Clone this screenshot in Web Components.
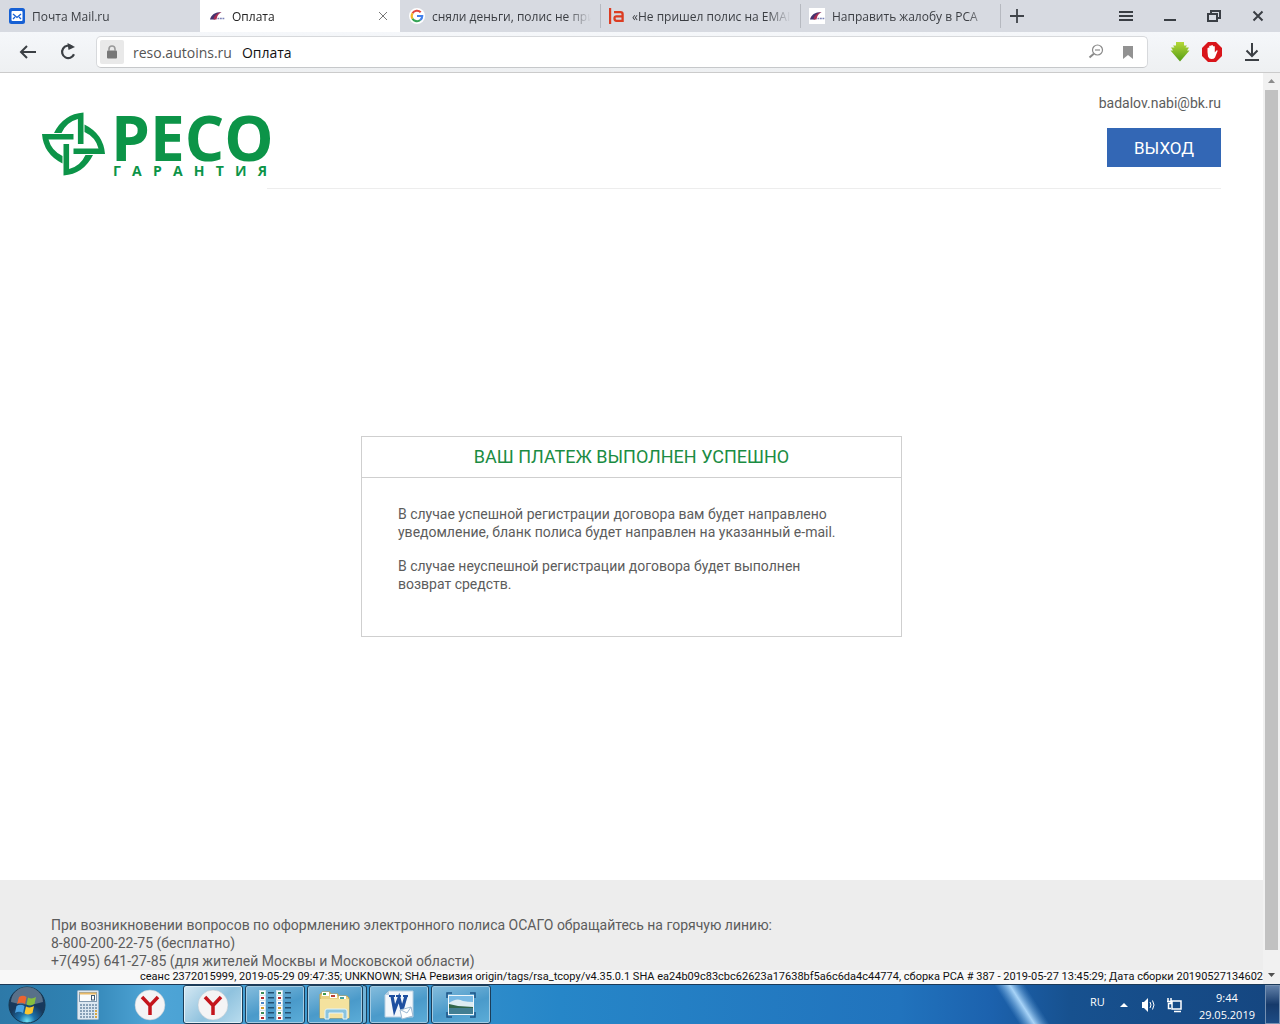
<!DOCTYPE html>
<html lang="ru">
<head>
<meta charset="utf-8">
<title>Оплата</title>
<style>
  html, body { height: 100%; margin: 0; }
  body { font-family: Roboto, "Liberation Sans", sans-serif; overflow: hidden; background: #fff; }
</style>
</head>
<body>
<desktop-shell>
  <tab-strip slot="tabs">
    <browser-tab><mail-icon slot="icon"></mail-icon>Почта Mail.ru</browser-tab>
    <browser-tab active><rsa-icon slot="icon"></rsa-icon>Оплата</browser-tab>
    <browser-tab><google-icon slot="icon"></google-icon>сняли деньги, полис не пришел</browser-tab>
    <browser-tab divided><la-icon slot="icon"></la-icon>«Не пришел полис на EMAIL</browser-tab>
    <browser-tab divided><rsa-icon slot="icon"></rsa-icon>Направить жалобу в РСА</browser-tab>
  </tab-strip>
  <address-row slot="toolbar"></address-row>
  <site-page slot="page">
    <site-header>badalov.nabi@bk.ru</site-header>
    <message-card>
      <span slot="title">ВАШ ПЛАТЕЖ ВЫПОЛНЕН УСПЕШНО</span>
      <p>В случае успешной регистрации договора вам будет направлено уведомление, бланк полиса будет направлен на указанный e-mail.</p>
      <p>В случае неуспешной регистрации договора будет выполнен возврат средств.</p>
    </message-card>
    <site-footer slot="footer">
      <div>При возникновении вопросов по оформлению электронного полиса ОСАГО обращайтесь на горячую линию:</div>
      <div>8-800-200-22-75 (бесплатно)</div>
      <div>+7(495) 641-27-85 (для жителей Москвы и Московской области)</div>
    </site-footer>
    <build-line slot="footer">сеанс 2372015999, 2019-05-29 09:47:35; UNKNOWN; SHA Ревизия origin/tags/rsa_tcopy/v4.35.0.1 SHA ea24b09c83cbc62623a17638bf5a6c6da4c44774, сборка РСА # 387 - 2019-05-27 13:45:29; Дата сборки 20190527134602</build-line>
  </site-page>
  <task-bar slot="taskbar"></task-bar>
</desktop-shell>

<script>
const define = (name, html, setup) => customElements.define(name, class extends HTMLElement {
  constructor() {
    super();
    const root = this.attachShadow({ mode: 'open' });
    const t = document.createElement('template');
    t.innerHTML = html;
    root.append(t.content.cloneNode(true));
    if (setup) setup(this, root);
  }
});
const RESET = 'button{font:inherit;color:inherit;border:0;background:none;padding:0;margin:0;cursor:pointer}svg{display:block}';

define('desktop-shell', `<style>
  :host{display:flex;flex-direction:column;height:100vh}
  .page{flex:1;min-height:0;display:flex}
</style><slot name="tabs"></slot><slot name="toolbar"></slot><div class="page"><slot name="page"></slot></div><slot name="taskbar"></slot>`);

/* tab icons */
const icon = (name, size, body) => define(name, `<style>:host{display:block;flex:none;width:16px}svg{display:block}</style><svg width="16" height="16" viewBox="0 0 ${size} ${size}">${body}</svg>`);
icon('mail-icon', 16, '<rect width="16" height="16" rx="2.5" fill="#1660d4"/><rect x="2.5" y="3" width="11" height="10" rx="1" fill="#fff"/><path d="M4 6 8 9.500l4-3.500M4 11l2-2M12 11l-2-2" fill="none" stroke="#1660d4" stroke-width="1.300"/>');
icon('rsa-icon', 16, '<rect width="16" height="16" fill="#fff"/><path d="M1 11.500C2 7 6 4 12.500 4 8.500 5.500 6.500 8 6 11.500z" fill="#45336f"/><path d="M4.500 11.500C5 8 7.500 5.200 12.500 4c-3 1.800-4.500 4-5 7.500z" fill="#a92d51"/><path d="M8.500 10.500h1.800M11 10.500h1.800M13.500 10.500h1.800" stroke="#7c82b8" stroke-width="1.400"/>');
icon('google-icon', 16, '<circle cx="8" cy="8" r="8" fill="#fff"/><g fill="none" stroke-width="2.200"><path d="M3.500 5.300A5.200 5.200 0 0 1 11.700 4.300" stroke="#e2483b"/><path d="M3.500 5.300a5.200 5.200 0 0 0 0 5.400" stroke="#f2b725"/><path d="M3.500 10.700a5.200 5.200 0 0 0 7.800 1.300" stroke="#35a456"/><path d="M11.300 12c1.200-1 1.900-2.400 1.900-4H8" stroke="#4280ec"/></g>');
icon('la-icon', 16, '<path d="M1.100 0v16" stroke="#dc3c22" stroke-width="2.200"/><path d="M5 4.200h6.500Q13.600 4.200 13.600 6.300v6.500H7.500Q5.500 12.800 5.500 10.500T7.500 8.300h6" fill="none" stroke="#dc3c22" stroke-width="2.300"/>');

define('browser-tab', `<style>${RESET}
  :host{display:flex;align-items:center;flex:0 1 200px;min-width:0;box-sizing:border-box;height:32px;padding:0 9px;color:#3a3d42}
  :host([active]){background:#fff;color:#222}
  .sep{display:none;flex:none;width:1px;height:24px;margin-left:-9px;margin-right:8px;background:#b6b9c0}
  :host([divided]) .sep{display:block}
  .t{display:flex;align-items:center;gap:7px;flex:1;min-width:0;text-align:left}
  .l{overflow:hidden;white-space:nowrap;flex:1;-webkit-mask-image:linear-gradient(90deg,#000 calc(100% - 24px),transparent);mask-image:linear-gradient(90deg,#000 calc(100% - 24px),transparent)}
  .x{display:none;width:16px;height:16px}
  :host([active]) .x{display:block}
</style><span class="sep"></span><button class="t" role="tab"><slot name="icon"></slot><span class="l"><slot></slot></span></button><button class="x" aria-label="Закрыть вкладку"><svg width="16" height="16"><path d="M4 4l8 8M12 4l-8 8" stroke="#777" fill="none"/></svg></button>`);

define('tab-strip', `<style>${RESET}
  :host{display:flex;flex:none;align-items:center;height:32px;background:#d7dae1;font:12px "Open Sans","Noto Sans",sans-serif}
  .sep{width:1px;height:24px;background:#b6b9c0}
  .w{display:flex;margin-left:auto;padding-right:14px;gap:28px}
  .plus{margin-left:8px}
</style><slot></slot><span class="sep"></span><button class="plus" aria-label="Новая вкладка"><svg width="16" height="16"><path d="M8 1v14M1 8h14" stroke="#3f4349" stroke-width="1.800"/></svg></button>
<div class="w"><button aria-label="Меню"><svg width="16" height="16"><path d="M1 4h14M1 8h14M1 12h14" stroke="#3a3e44" stroke-width="2"/></svg></button>
<button aria-label="Свернуть"><svg width="16" height="16"><path d="M2 12h12" stroke="#3a3e44" stroke-width="2"/></svg></button>
<button aria-label="Окно"><svg width="16" height="16" fill="none" stroke="#3a3e44" stroke-width="2"><path d="M2 6h9v7H2zM5 6V3h9v7h-3"/></svg></button>
<button aria-label="Закрыть"><svg width="16" height="16"><path d="M3.500 3.500l9 9M12.500 3.500l-9 9" stroke="#3a3e44" stroke-width="2"/></svg></button></div>`);

define('address-row', `<style>${RESET}
  :host{display:flex;flex:none;align-items:center;box-sizing:border-box;height:41px;padding:0 20px 0 19px;background:linear-gradient(#f5f7fa,#eef0f2);border-bottom:1px solid #cbcbcb;font:14px "Open Sans","Noto Sans",sans-serif}
  .nav{display:flex;gap:22px;margin-right:19px}
  .box{display:flex;align-items:center;flex:1;min-width:0;box-sizing:border-box;height:32px;padding:0 11px 0 3px;background:#fff;border:1px solid #d7d9dc;border-bottom-color:#c6c8ca;border-radius:5px}
  .lock{display:flex;align-items:center;justify-content:center;width:24px;height:24px;background:#e9e9e9;border-radius:2px;margin-right:9px}
  label{color:#555;margin-right:10px}
  input{flex:1;min-width:0;font:inherit;color:#111;border:0;padding:0;background:none;outline:0}
  .in{display:flex;gap:16px}
  .ext{display:flex;align-items:center;gap:12px;margin-left:22px}
  .dl{margin-left:10px}
</style><div class="nav"><button aria-label="Назад"><svg width="18" height="20" fill="none" stroke="#3b3f44" stroke-width="2"><path d="M17 10H2M8 4l-6 6 6 6"/></svg></button>
<button aria-label="Обновить"><svg width="18" height="20"><path d="M13 4.900A6.200 6.200 0 1 0 15 12.300" fill="none" stroke="#3b3f44" stroke-width="2.200"/><path d="M8.500 1l7.500 4-6.500 3z" fill="#3b3f44"/></svg></button></div>
<div class="box"><span class="lock"><svg width="12" height="14"><rect x="1" y="5.500" width="10" height="8" rx="1" fill="#777"/><path d="M3 6V4a3 3 0 0 1 6 0v2" fill="none" stroke="#999" stroke-width="1.600"/></svg></span>
<label for="u">reso.autoins.ru</label><input id="u" value="Оплата">
<div class="in"><button aria-label="Масштаб"><svg width="16" height="16" fill="none" stroke="#8b8b8b"><circle cx="9.500" cy="6" r="5" stroke-width="1.200"/><path d="M7 6h5" stroke-width="1.200"/><path d="M5.800 9.700 1.500 13.500" stroke-width="2"/></svg></button>
<button aria-label="Закладка"><svg width="16" height="16"><path d="M3 2h10v13l-5-4-5 4z" fill="#929292"/></svg></button></div></div>
<div class="ext"><button aria-label="Загрузчик"><svg width="20" height="20"><defs><linearGradient id="g" x2="0" y2="1"><stop stop-color="#b5d839"/><stop offset="1" stop-color="#559d16"/></linearGradient></defs><path d="M6 0h8v3.500h3L15.500 5.500h3.500L17 8.500h2.500L10 19.500.5 8.500H3L1 5.500h3.500L3 3.500h3z" fill="url(#g)"/></svg></button>
<button aria-label="Блокировщик"><svg width="20" height="20"><path d="M6 0h8l6 6v8l-6 6H6l-6-6V6z" fill="#d9151b"/><path d="M5.500 10V6.200q1-1.200 1.700 0V4.200q1-1.200 1.900 0v-.7q1-1.200 1.900 0v1q1-1 1.800 0v6l1.600-2q1.200-.6 1.200.6L13 15.500q-1 1.500-3.500 1.500T6 14.500z" fill="#fff"/></svg></button>
<button class="dl" aria-label="Загрузки"><svg width="16" height="20" fill="none" stroke="#3b3f44" stroke-width="2"><path d="M8 1v13M2.500 8.500 8 14l5.500-5.500M1 18h14"/></svg></button></div>`);

define('scroll-track', `<style>
  :host{display:flex;flex-direction:column;align-items:center;flex:none;width:17px;background:#f1f1f1}
  svg{display:block;flex:none}.thumb{width:13px;flex:1;margin-bottom:17px;background:#c1c1c1}
</style><svg width="17" height="17"><path d="M5 10h7L8.500 6z" fill="#8b8b8b"/></svg><div class="thumb"></div><svg width="17" height="17"><path d="M5 6h7l-3.500 4z" fill="#505050"/></svg>`);

define('site-page', `<style>
  :host{display:flex;flex:1;min-width:0;background:#fff;color:#5c5c5c;font-size:14px;line-height:18px}
  .col{display:flex;flex-direction:column;flex:1;min-width:0}
</style><div class="col"><slot></slot><slot name="footer"></slot></div><scroll-track></scroll-track>`);

/* the mark is one blade turned four times about its centre */
const blade = a => `<path transform="rotate(${a})" d="M10-31.500V0H4.400V-25Q-7-22-12-11H-19.500Q-10-30 10-31.500z"/>`;
define('reso-logo', `<style>
  :host{display:flex;align-items:center;gap:6px;width:225px;color:#0c9448}
  svg{flex:none}
  .w{flex:1;min-width:0;font-family:"Open Sans","Noto Sans",sans-serif;font-weight:700}
  .big{font-size:62px;line-height:54px}
  .small{display:flex;justify-content:space-between;padding-left:2px;font-size:14px;line-height:14px}
</style><svg width="63" height="66" viewBox="-31.500 -33 63 66" fill="#0c9448">${[0, 90, 180, 270].map(blade).join('')}</svg>
<div class="w"><div class="big">РЕСО</div><div class="small"><span>Г</span><span>А</span><span>Р</span><span>А</span><span>Н</span><span>Т</span><span>И</span><span>Я</span></div></div>`);

define('site-header', `<style>${RESET}
  :host{display:flex;flex:none;height:116px;padding:0 42px}
  reso-logo{padding-top:26px}
  .r{flex:1;display:flex;flex-direction:column;align-items:flex-end;border-bottom:1px solid #ededed;box-sizing:border-box;padding-top:21px;gap:16px}
  .exit{width:114px;height:39px;background:#3367b5;color:#fff;font-size:17px}
</style><reso-logo></reso-logo><div class="r"><span><slot></slot></span><button class="exit">ВЫХОД</button></div>`);

define('message-card', `<style>
  :host{display:flex;flex:1;align-items:center;justify-content:center;padding-top:4px;box-sizing:border-box}
  .c{width:541px;box-sizing:border-box;border:1px solid #cfcfcf}
  h1{margin:0;font-size:18px;font-weight:400;line-height:40px;text-align:center;color:#1b8c43;border-bottom:1px solid #cfcfcf}
  .b{display:flex;flex-direction:column;gap:16px;padding:27px 52px 43px 36px}
  ::slotted(p){margin:0}
</style><section class="c"><h1><slot name="title"></slot></h1><div class="b"><slot></slot></div></section>`);

define('site-footer', `<style>
  :host{display:block;flex:none;background:#ededed;padding:36px 51px 0}
</style><slot></slot>`);
define('build-line', `<style>
  :host{display:block;flex:none;background:#f8f8f8;color:#111;font-size:11px;line-height:14px;text-align:right;white-space:nowrap}
</style><slot></slot>`);

define('task-button', `<style>${RESET}
  :host{display:flex;flex:none;width:60px;height:39px}
  button{display:flex;align-items:center;justify-content:center;flex:1;height:100%}
  .back{display:none;width:4px;box-sizing:border-box;border:1px solid #1b3d59;border-left:0;border-radius:0 3px 3px 0;background:#6fb2d8}
  :host([stack]) .back{display:block}
  :host([open]) button,:host([current]) button{box-sizing:border-box;border:1px solid #1b3d59;border-radius:3px;box-shadow:inset 0 0 0 1px #a2cbe3;background:linear-gradient(160deg,#86bddd,#4a9aca 55%,#5cadd8)}
  :host([current]) button{background:linear-gradient(135deg,#d5e8f3,#8fc2de 55%,#b9dcee);box-shadow:inset 0 0 0 1px #e2f1f8}
</style><button><slot></slot></button><span class="back"></span>`, (el, root) => {
  root.querySelector('button').setAttribute('aria-label', el.getAttribute('name') || 'Приложение');
});

const Y = '<svg width="32" height="32"><circle cx="16" cy="16" r="15" fill="#f4f4f5" stroke="#b5c3cd" stroke-width=".5"/><path d="M8 8 16 16.500 24 8M16 16v10" fill="none" stroke="#c4151c" stroke-width="3.500"/></svg>';
const rows = (() => { let s = ''; const c = ['#3c8b56', '#b52f2f', '#4b85c5', '#d49c2e', '#3c8b56', '#b52f2f'];
  for (let x of [0, 17]) c.forEach((k, i) => s += `<rect x="${x + .5}" y="${i * 5 + .5}" width="6" height="4.500" fill="#fff" stroke="#dfe9ee" stroke-width=".6"/><rect x="${x + 2}" y="${i * 5 + 2}" width="3" height="2" fill="${k}"/><rect x="${x + 9}" y="${i * 5 + 2}" width="6" height="1.500" fill="#245173"/>`);
  return s; })();
const keys = (() => { let s = ''; for (let r = 0; r < 5; r++) for (let k = 0; k < 6; k++) s += `<rect x="${3 + k * 3}" y="${14 + r * 3}" width="2" height="2" fill="${k == 5 && r > 1 ? '#d8a63f' : '#87a0b7'}"/>`; return s; })();

define('task-bar', `<style>${RESET}
  :host{display:flex;flex:none;align-items:stretch;box-sizing:border-box;height:40px;border-top:1px solid #1c3a58;color:#fff;font:12px "Open Sans","Noto Sans",sans-serif;
    background:linear-gradient(90deg,#2d79a8 0,#2f82b3 80px,#4fa5d6 150px,#3f9bd1 300px,#2e8cca 480px,#2686c8 560px,#2173bd 900px,#1c62ae 990px,#17518f 1070px,#154680 100%)}
  .start{width:54px;display:flex;align-items:center;justify-content:center}
  .quick{display:flex;padding-left:4px;gap:2px}
  .wins{display:flex;gap:2px;margin-left:3px}
  .beam{flex:1;min-width:0;overflow:hidden}
  .beam svg{height:39px;margin-left:auto}
  .tray{display:flex;align-items:center;gap:9px;padding-right:10px}
  .lang{font-size:11px;margin-right:2px;padding-bottom:6px}
  .clock{display:flex;flex-direction:column;align-items:center;font-size:11px;line-height:17px;padding:3px 0 0 8px}
  .show{width:15px;box-sizing:border-box;border:1px solid #7590b1;background:linear-gradient(#6180a8,#163a6b 50%,#1d4b84)}
  .lang,.clock{white-space:nowrap}
</style>
<button class="start" aria-label="Пуск"><svg width="38" height="38"><defs><radialGradient id="o" cy=".95"><stop stop-color="#6fe4f5"/><stop offset=".45" stop-color="#1a70aa"/><stop offset="1" stop-color="#18395c"/></radialGradient></defs><circle cx="19" cy="19" r="18" fill="url(#o)" stroke="#16364f"/><path d="M3 16a16 15 0 0 1 32 0q-16 5-32 0" fill="#fff" opacity=".28"/><path d="M11 11q4-2.500 7.500 0L17 18q-4-2.500-8 0z" fill="#ec6430"/><path d="M20 11.500q4 2 8-.500L26.500 18q-4 2.500-8 .5z" fill="#86be3f"/><path d="M8.500 20q4-2.500 8 0L15 27q-4-2.500-8 0z" fill="#4aa3e4"/><path d="M18 20.500q4 2 8-.500L24.500 27q-4 2.500-8 .5z" fill="#fbc62f"/></svg></button>
<div class="quick"><task-button name="Калькулятор"><svg width="22" height="30"><rect x=".5" y=".5" width="21" height="29" rx="1" fill="#dbe7f1" stroke="#9db5c8"/><rect x="2.500" y="2.500" width="17" height="9" fill="#f9fbfc" stroke="#8099b0"/><path d="M2.500 2.500h17v2h-17z" fill="#e9bb69"/><rect x="14.500" y="5.500" width="3" height="4.500" fill="none" stroke="#415a73"/>${keys}</svg></task-button>
<task-button name="Яндекс">${Y}</task-button></div>
<div class="wins"><task-button name="Яндекс.Браузер" current>${Y}</task-button>
<task-button name="Список" open><svg width="32" height="30">${rows}</svg></task-button>
<task-button name="Проводник" open stack><svg width="34" height="32"><path d="M2 5h2V3h8v2h8v2h9l2 2v20H2z" fill="#e9d282" stroke="#c4a550"/><path d="M4 3h7v4H4z" fill="#fff"/><path d="M5 4h3v2H5z" fill="#3c9a4c"/><path d="M12 5h7v4h-7z" fill="#fff"/><path d="M13 6h4v2h-4z" fill="#bf4032"/><path d="M21 7h7v4h-7z" fill="#fff"/><path d="M22 8h4v2h-4z" fill="#46a2a0"/><path d="M2 10h29v19H2z" fill="#f4e29e"/><path d="M7 30V22q0-2 2-2h18q2 0 2 2v8h-4v-6H11v6z" fill="#8ac4de" stroke="#e4f5fb"/></svg></task-button>
<task-button name="Word" open><svg width="30" height="30"><path d="M5 1h24v26H1V5z" fill="#f3f7fb" stroke="#b7cfe2"/><path d="M5 1v4H1z" fill="#b7cfe2"/><path d="M5 6h6M12 6h5M19 6h5" stroke="#1e4fa0" stroke-width="2"/><path d="M8 6l2.500 14L15 8l3 12L22 6" fill="none" stroke="#1e4fa0" stroke-width="3.200"/><path d="M16 20l11-3 2 9-11 3z" fill="#fff" stroke="#9db9d2"/><path d="M17 20l6 3 4-6" fill="none" stroke="#9db9d2"/></svg></task-button>
<task-button name="Изображение" open><svg width="30" height="26"><path d="M1 6V1h5M24 1h5v5M29 20v5h-5M6 25H1v-5" fill="none" stroke="#1c5486" stroke-width="1.500"/><rect x="2" y="3" width="26" height="20" fill="#eff7fb"/><rect x="3" y="4" width="24" height="18" fill="#77b9e4"/><path d="M3 11q8-6 14-2 5 1 10 1v5H3z" fill="#dcecf3"/><path d="M3 12l9 2 15 1v2H3z" fill="#31664b"/><path d="M3 16h24v6H3z" fill="#427e92"/></svg></task-button></div>
<div class="beam"><svg width="112" height="39"><defs><linearGradient id="b" gradientUnits="userSpaceOnUse" x1="34" y1="28" x2="56" y2="14"><stop stop-color="#7db8ea" stop-opacity="0"/><stop offset=".5" stop-color="#a8d4f8"/><stop offset="1" stop-color="#5d9ad3" stop-opacity="0"/></linearGradient></defs><path d="M0 0H112V39H0z" fill="url(#b)"/></svg></div>
<div class="tray"><span class="lang">RU</span>
<svg width="16" height="16"><path d="M4 10h8L8 6z" fill="#fff"/></svg>
<svg width="16" height="16"><path d="M1 5h2l4-4v14l-4-4H1z" fill="#fff"/><path d="M9 5q2 3 0 6M11.500 3.500q3 4.500 0 9" fill="none" stroke="#fff"/></svg>
<svg width="16" height="16" fill="none" stroke="#fff" stroke-width="1.500"><path d="M6 4h9v8H6zM8 14.500h7M2 1v3M5 1v3M1 4.500h4v2H2.500v5H5"/></svg>
<div class="clock"><span>9:44</span><span>29.05.2019</span></div></div>
<button class="show" aria-label="Показать рабочий стол"></button>`);
</script>
</body>
</html>
